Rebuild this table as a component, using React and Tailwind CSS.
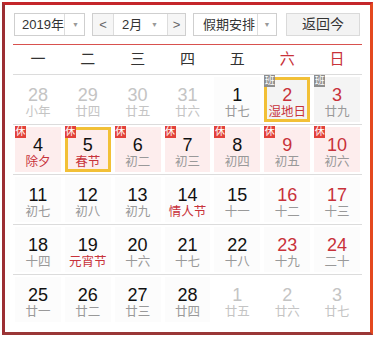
const FONT = { fontFamily: '"Liberation Sans", "Noto Sans CJK SC", sans-serif' };

const rows = [
  [
    { d: 28, l: '小年', o: true },
    { d: 29, l: '廿四', o: true },
    { d: 30, l: '廿五', o: true },
    { d: 31, l: '廿六', o: true },
    { d: 1, l: '廿七' },
    { d: 2, l: '湿地日', red: true, lr: true, work: true, sel: true },
    { d: 3, l: '廿九', red: true, work: true },
  ],
  [
    { d: 4, l: '除夕', lr: true, off: true },
    { d: 5, l: '春节', lr: true, off: true, sel: true },
    { d: 6, l: '初二', off: true },
    { d: 7, l: '初三', off: true },
    { d: 8, l: '初四', off: true },
    { d: 9, l: '初五', red: true, off: true },
    { d: 10, l: '初六', red: true, off: true },
  ],
  [
    { d: 11, l: '初七' },
    { d: 12, l: '初八' },
    { d: 13, l: '初九' },
    { d: 14, l: '情人节', lr: true },
    { d: 15, l: '十一' },
    { d: 16, l: '十二', red: true },
    { d: 17, l: '十三', red: true },
  ],
  [
    { d: 18, l: '十四' },
    { d: 19, l: '元宵节', lr: true },
    { d: 20, l: '十六' },
    { d: 21, l: '十七' },
    { d: 22, l: '十八' },
    { d: 23, l: '十九', red: true },
    { d: 24, l: '二十', red: true },
  ],
  [
    { d: 25, l: '廿一' },
    { d: 26, l: '廿二' },
    { d: 27, l: '廿三' },
    { d: 28, l: '廿四' },
    { d: 1, l: '廿五', o: true },
    { d: 2, l: '廿六', o: true },
    { d: 3, l: '廿七', o: true },
  ],
];

const weekdays = ['一', '二', '三', '四', '五', '六', '日'];

function Arrow() {
  return <span className="text-[7px] text-[#999] leading-none">▼</span>;
}

function Cell({ c }) {
  const bg = c.off ? 'bg-[#fdeded]' : c.work ? 'bg-[#f4f4f4]' : c.o ? 'bg-white' : 'bg-[#fcfcfc]';
  const border = c.sel ? 'border-[3px] border-[#f2c037]' : 'border-[3px] border-transparent';
  const numColor = c.o ? 'text-[#c4c4c4]' : c.red ? 'text-[#c8323a]' : 'text-[#111]';
  const lunColor = c.o ? 'text-[#c4c4c4]' : c.lr ? 'text-[#c8323a]' : 'text-[#999]';
  return (
    <div className="relative h-[49px] p-[2px]">
      <div className={`h-full flex flex-col items-center ${bg} ${border}`}>
        <div className={`mt-[5px] text-[18px] leading-[20px] ${numColor}`}>{c.d}</div>
        <div className={`text-[12.5px] leading-[14px] whitespace-nowrap ${lunColor}`}>{c.l}</div>
      </div>
      {c.off && (
        <div className="absolute left-[2px] top-[1px] w-[11px] h-[12px] bg-[#e2413a] text-white text-[10px] leading-[12px] text-center">休</div>
      )}
      {c.work && (
        <div className="absolute left-[2px] top-[0px] w-[11px] h-[12px] bg-[#8e8e8e] text-white text-[10px] leading-[12px] text-center">班</div>
      )}
    </div>
  );
}

export default function App() {
  return (
    <div className="w-[373px] h-[338px] bg-white" style={FONT}>
      <div className="ml-[2px] mt-[2px] w-[371px] h-[333px] border-[3px] border-t-[#c4262a] border-l-[#9c2f33] border-b-[#9a3737] border-r-[#e4481f] px-[8px]">
        {/* header controls */}
        <div className="flex items-center mt-[8px] ml-[1px] h-[23px] text-[13px] text-[#333] whitespace-nowrap">
          <div className="w-[71px] h-full flex border border-[#cfcfcf] bg-white">
            <div className="flex-1 pl-[7px] leading-[21px]">2019年</div>
            <div className="w-[22px] shrink-0 border-l border-[#ddd] flex items-center justify-center"><Arrow /></div>
          </div>
          <div className="ml-[7px] w-[94px] h-full flex border border-[#cfcfcf] bg-white">
            <div className="w-[21px] shrink-0 bg-[#f6f6f6] border-r border-[#ddd] flex items-center justify-center text-[#666] text-[13px]">&lt;</div>
            <div className="flex-1 pl-[8px] leading-[21px]">2月</div>
            <div className="w-[16px] shrink-0 flex items-center justify-start"><Arrow /></div>
            <div className="w-[18px] shrink-0 bg-[#f6f6f6] border-l border-[#ddd] flex items-center justify-center text-[#666] text-[13px]">&gt;</div>
          </div>
          <div className="ml-[7px] w-[84px] h-full flex border border-[#cfcfcf] bg-white">
            <div className="flex-1 pl-[9px] leading-[21px] overflow-hidden">假期安排</div>
            <div className="w-[19px] shrink-0 border-l border-[#ddd] flex items-center justify-center"><Arrow /></div>
          </div>
          <div className="ml-[9px] w-[74px] h-full border border-[#dadada] bg-[#f3f3f3] text-center leading-[21px] text-[14px]">返回今</div>
        </div>

        <div className="mt-[8px] h-px bg-[#d8514e]" />

        {/* weekdays */}
        <div className="grid grid-cols-7 h-[30px] items-center text-center text-[15px] text-[#333] border-b border-[#dcdcdc]">
          {weekdays.map((w, i) => (
            <div key={w} className={i >= 5 ? 'text-[#c8323a]' : ''}>{w}</div>
          ))}
        </div>

        {rows.map((r, ri) => (
          <div key={ri} className={`grid grid-cols-7 h-[50px] ${ri < 4 ? 'border-b border-[#dcdcdc]' : ''}`}>
            {r.map((c, ci) => (
              <Cell key={ci} c={c} />
            ))}
          </div>
        ))}
      </div>
    </div>
  );
}
